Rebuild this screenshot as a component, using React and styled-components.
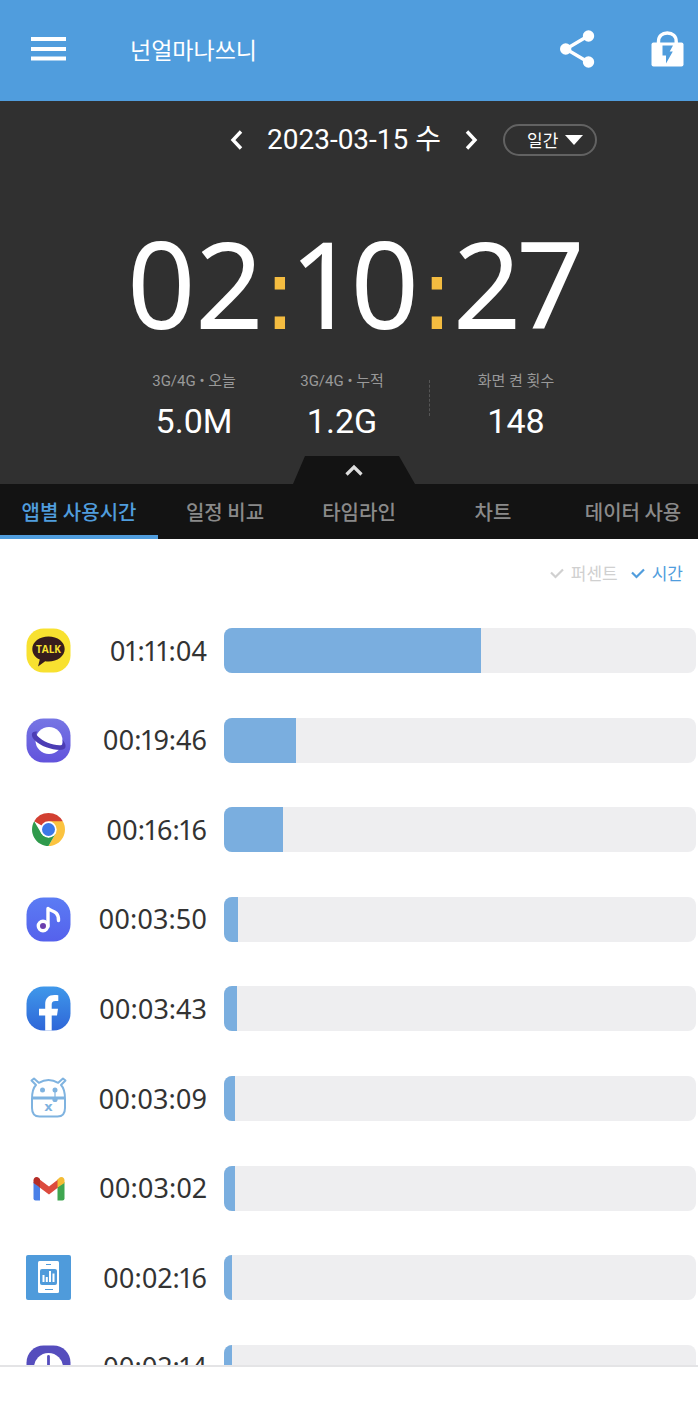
import React, { useState } from 'react'
import styled, { createGlobalStyle } from 'styled-components';

const GlobalStyle = createGlobalStyle`
  * {
    box-sizing: border-box;
  }
  body {
    margin: 0;
    background: #fff;
    font-family: Roboto, 'Noto Sans CJK KR', sans-serif;
  }
  button, select, input {
    margin: 0;
    padding: 0;
    border: 0;
    background: none;
    color: inherit;
    font: inherit;
    cursor: pointer;
  }
`;

const TOTAL_SECONDS = 7827;

const apps = [
  { name: '카카오톡', time: '01:11:04', Icon: TalkIcon },
  { name: '삼성 인터넷', time: '00:19:46', Icon: PlanetIcon },
  { name: 'Chrome', time: '00:16:16', Icon: ChromeIcon },
  { name: '삼성 뮤직', time: '00:03:50', Icon: MusicIcon },
  { name: 'Facebook', time: '00:03:43', Icon: FacebookIcon },
  { name: '돼지', time: '00:03:09', Icon: PiggyIcon },
  { name: 'Gmail', time: '00:03:02', Icon: GmailIcon },
  { name: '넌얼마나쓰니', time: '00:02:16', Icon: UsageIcon },
  { name: '시계', time: '00:02:14', Icon: ClockIcon },
];

const tabs = ['앱별 사용시간', '일정 비교', '타임라인', '차트', '데이터 사용'];

const toPercent = (time) => {
  const [h, m, s] = time.split(':').map(Number);
  return ((h * 3600 + m * 60 + s) / TOTAL_SECONDS) * 100;
};

function TalkIcon() {
  return (
    <svg viewBox="0 0 45 45" aria-hidden="true">
      <rect x="0.5" y="0.5" width="44" height="44" rx="17" fill="#f8e130" />
      <path d="M22.500 8.500C31.500 8.500 38.700 13.800 38.700 21S31.500 33.500 22.500 33.500Q20.800 33.500 19.200 33.200L12 38.500L13.800 31.600C9 29.500 6.300 25.600 6.300 21C6.300 13.800 13.500 8.500 22.500 8.500Z" fill="#371c1d" />
      <text x="22.500" y="25" textAnchor="middle" fontFamily="Open Sans, sans-serif" fontSize="10" fontWeight="700" fill="#f8e130">TALK</text>
    </svg>
  )
}

function PlanetIcon() {
  return (
    <svg viewBox="0 0 45 45" aria-hidden="true">
      <defs>
        <linearGradient id="planet" x1="0" y1="0" x2="0" y2="1">
          <stop offset="0" stopColor="#7676e4" />
          <stop offset="1" stopColor="#6253dc" />
        </linearGradient>
      </defs>
      <rect x="0.5" y="0.5" width="44" height="44" rx="17" fill="url(#planet)" />
      <circle cx="23" cy="22.500" r="13.500" fill="#fff" />
      <path d="M11.500 13.500C4.500 12.500 4.500 18 9 22.500C15 28.500 27 32.500 36 31.800C41 31 40.500 26 36.300 21.500C37.800 25.500 37 27.500 33.500 27.300C26 27 17 23.500 12 18.500C9.800 16.200 10 14.500 11.500 13.500Z" fill="#4c3db4" />
    </svg>
  )
}

function ChromeIcon() {
  return (
    <svg viewBox="0 0 45 45" aria-hidden="true">
      <g transform="translate(22.500 22.500)">
        <path d="M0 0L-14.300 -8.200A16.500 16.500 0 0 1 14.300 -8.200Z" fill="#d23f31" />
        <path d="M0 -8.200H14.300A16.500 16.500 0 0 1 0 16.500L7.100 4.100Z" fill="#fbc33f" />
        <path d="M-14.300 -8.200L-7.100 4.100L0 8L7.100 4.100L0 16.500A16.500 16.500 0 0 1 -14.300 -8.200Z" fill="#2f9a4c" />
        <circle r="8.200" fill="#fff" />
        <circle r="6.500" fill="#3b78e7" />
      </g>
    </svg>
  )
}

function MusicIcon() {
  return (
    <svg viewBox="0 0 45 45" aria-hidden="true">
      <defs>
        <linearGradient id="music" x1="0" y1="0" x2="0" y2="1">
          <stop offset="0" stopColor="#5b7cf4" />
          <stop offset="1" stopColor="#5561ec" />
        </linearGradient>
      </defs>
      <rect x="0.500" y="0.500" width="44" height="44" rx="17" fill="url(#music)" />
      <circle cx="17" cy="29" r="4.700" fill="#6a3fae" stroke="#fff" strokeWidth="3.400" />
      <path d="M22 29.500V11.500C24 14.500 33 13 32.500 23.500" fill="none" stroke="#fff" strokeWidth="3.400" strokeLinecap="round" strokeLinejoin="round" />
    </svg>
  )
}

function FacebookIcon() {
  return (
    <svg viewBox="0 0 45 45" aria-hidden="true">
      <defs>
        <linearGradient id="facebook" x1="0" y1="0" x2="0" y2="1">
          <stop offset="0" stopColor="#3f98ea" />
          <stop offset="1" stopColor="#2f66d8" />
        </linearGradient>
      </defs>
      <rect x="0.500" y="0.500" width="44" height="44" rx="17" fill="url(#facebook)" />
      <path d="M19.200 44.500V29.500H13V22.800H19.200V18.500C19.200 12.200 22.500 9 28.500 9C30 9 31.200 9.100 32.300 9.300V15H29.500C26.500 15 25.700 16.300 25.700 18.800V22.800H32L31 29.500H25.700V44.500Z" fill="#fff" />
    </svg>
  )
}

function PiggyIcon() {
  return (
    <svg viewBox="0 0 45 45" aria-hidden="true">
      <g fill="none" stroke="#7fb3e0" strokeWidth="2" strokeLinejoin="round">
        <path d="M6 23C6 16 7.500 11.500 10 9L5.500 4.500L8 2.500L12.800 6.800C19 3.300 26 3.300 32.200 6.800L37 2.500L39.500 4.500L35 9C37.500 11.500 39 16 39 23V32Q39 40.500 31.500 40.500H13.500Q6 40.500 6 32Z" />
        <path d="M6 22H39" strokeWidth="3.200" />
        <path d="M29 14V24" strokeWidth="1.200" />
      </g>
      <g fill="#7fb3e0">
        <circle cx="16.500" cy="14" r="2.500" />
        <circle cx="29" cy="14" r="2.500" />
        <circle cx="29" cy="23.500" r="2.600" />
        <text x="22.500" y="35" textAnchor="middle" fontFamily="DejaVu Sans, sans-serif" fontSize="13" fontWeight="700">x</text>
      </g>
    </svg>
  )
}

function GmailIcon() {
  return (
    <svg viewBox="0 0 45 45" aria-hidden="true">
      <path d="M7.500 16L14 21V34.500H9.500Q7.500 34.500 7.500 32.500Z" fill="#4a80e8" />
      <path d="M31.500 21L38.500 16V32.500Q38.500 34.500 36.500 34.500H31.500Z" fill="#3fa650" />
      <path d="M13 13L23 20.500L32 13.500V21.500L23 28.500L13 21Z" fill="#dc4b3e" />
      <path d="M7.500 14.500C7.500 11 11 10 13.500 12.500L14 13V21.500L7.500 17Z" fill="#b52d27" />
      <path d="M38.500 14.500C38.500 11 35 10 32.500 12.500L31.500 13.500V21.500L38.500 17Z" fill="#f4bc35" />
    </svg>
  )
}

function UsageIcon() {
  return (
    <svg viewBox="0 0 45 45" aria-hidden="true">
      <rect width="45" height="45" rx="2" fill="#4f9bdb" />
      <rect x="12" y="6" width="21" height="32" rx="1.500" fill="#fff" />
      <rect x="14" y="14" width="17" height="16" rx="2" fill="#4f9bdb" />
      <path d="M20 9.500H25M19 34.500H27" stroke="#4f9bdb" strokeWidth="1.200" />
      <path d="M17.500 27V20M20.800 27V22M24 27V16M27.500 27V18.500" stroke="#fff" strokeWidth="2" />
    </svg>
  )
}

function ClockIcon() {
  return (
    <svg viewBox="0 0 45 45" aria-hidden="true">
      <rect x="0.500" y="0.500" width="44" height="44" rx="17" fill="#554dbd" />
      <circle cx="22.500" cy="22.500" r="14.500" fill="#fff" />
      <path d="M22.500 11.500V23" stroke="#554dbd" strokeWidth="2.800" strokeLinecap="round" />
    </svg>
  )
}

function CheckMark() {
  return (
    <svg width="14" height="11" viewBox="0 0 14 11" aria-hidden="true">
      <path d="M1 4.500L5.500 9L13 1.500" fill="none" stroke="currentColor" strokeWidth="2.200" />
    </svg>
  )
}

function Header() {
  return (
    <HeaderStyled>
      <IconButton aria-label="메뉴">
        <svg width="35" height="24" viewBox="0 0 35 24">
          <path d="M0 2H35M0 12H35M0 21.500H35" stroke="#fff" strokeWidth="3.800" />
        </svg>
      </IconButton>
      <h1>넌얼마나쓰니</h1>
      <IconButton aria-label="공유">
        <svg width="35" height="38" viewBox="0 0 35 38">
          <path d="M28 6L6 19L28 32" fill="none" stroke="#fff" strokeWidth="3.400" />
          <g fill="#fff">
            <circle cx="28.500" cy="6" r="5.700" />
            <circle cx="5.700" cy="19" r="5.700" />
            <circle cx="28.500" cy="32" r="5.700" />
          </g>
        </svg>
      </IconButton>
      <IconButton aria-label="잠금">
        <svg width="33" height="36" viewBox="0 0 33 36">
          <path d="M7.500 15V10.500C7.500 5 11 2 16.300 2S25.200 5 25.200 10.500V15" fill="none" stroke="#fff" strokeWidth="3.400" />
          <rect x="0.500" y="11.500" width="32" height="24" rx="2" fill="#fff" />
          <path d="M11.500 14.500H22L18.700 20.500H21.800L15 32.500V24.500H11.500Z" fill="#509ddd" />
        </svg>
      </IconButton>
    </HeaderStyled>
  )
}

function Summary() {
  return (
    <SummaryStyled>
      <DateRow>
        <DatePicker>
          <IconButton aria-label="이전 날짜">
            <svg width="14" height="20" viewBox="0 0 14 20">
              <path d="M12 1.500L4 10L12 18.500" fill="none" stroke="#fff" strokeWidth="3.400" />
            </svg>
          </IconButton>
          <time dateTime="2023-03-15">2023-03-15 수</time>
          <IconButton aria-label="다음 날짜">
            <svg width="14" height="20" viewBox="0 0 14 20">
              <path d="M2 1.500L10 10L2 18.500" fill="none" stroke="#fff" strokeWidth="3.400" />
            </svg>
          </IconButton>
        </DatePicker>
        <PeriodPicker>
          <select aria-label="기간" defaultValue="일간">
            <option>일간</option>
            <option>주간</option>
            <option>월간</option>
          </select>
          <svg width="18" height="10" viewBox="0 0 18 10" aria-hidden="true">
            <path d="M0 0H18L9 10Z" fill="#fff" />
          </svg>
        </PeriodPicker>
      </DateRow>
      <Clock>
        <span>02</span><Colon>:</Colon><span>10</span><Colon>:</Colon><span>27</span>
      </Clock>
      <Stats>
        <Stat>
          <dt>3G/4G • 오늘</dt>
          <dd>5.0M</dd>
        </Stat>
        <Stat>
          <dt>3G/4G • 누적</dt>
          <dd>1.2G</dd>
        </Stat>
        <Stat $divided>
          <dt>화면 켠 횟수</dt>
          <dd>148</dd>
        </Stat>
      </Stats>
      <Handle aria-label="접기">
        <svg width="18" height="12" viewBox="0 0 18 12">
          <path d="M1.500 10.500L9 3L16.500 10.500" fill="none" stroke="#ddd" strokeWidth="3.200" />
        </svg>
      </Handle>
    </SummaryStyled>
  )
}

function AppRow({ name, time, Icon }) {
  return (
    <AppRowStyled aria-label={name}>
      <Icon />
      <Duration>{time}</Duration>
      <Track>
        <Fill style={{ width: `${toPercent(time)}%` }} />
      </Track>
    </AppRowStyled>
  )
}

function App() {
  const [tab, setTab] = useState(0);
  const [unit, setUnit] = useState('시간');

  return (
    <Page>
      <GlobalStyle />
      <Header />
      <Summary />
      <Tabs role="tablist">
        {tabs.map((label, i) => (
          <Tab key={label} role="tab" aria-selected={i === tab} $active={i === tab} onClick={() => setTab(i)}>
            {label}
          </Tab>
        ))}
      </Tabs>
      <Units>
        {['퍼센트', '시간'].map((label) => (
          <UnitOption key={label} $active={label === unit}>
            <input type="radio" name="unit" checked={label === unit} onChange={() => setUnit(label)} />
            <CheckMark />
            {label}
          </UnitOption>
        ))}
      </Units>
      <Viewport>
        <AppList>
          {apps.map((app) => (
            <AppRow key={app.name} {...app} />
          ))}
        </AppList>
      </Viewport>
      <Footer />
    </Page>
  )
}

const koreanFont = "'Noto Sans CJK KR', sans-serif";

const Page = styled.div`
  display: flex;
  flex-direction: column;
  height: 100vh;
  overflow: hidden;
`;

const IconButton = styled.button`
  display: flex;
  align-items: center;
  justify-content: center;
`;

const HeaderStyled = styled.header`
  display: flex;
  align-items: center;
  flex-shrink: 0;
  height: 101px;
  padding: 0 14px 4px 31px;
  background: #509ddd;
  color: #fff;
  h1 {
    flex: 1;
    margin: 0 0 0 64px;
    font-family: ${koreanFont};
    font-size: 23px;
    line-height: 32px;
    font-weight: 400;
  }
  button + button {
    margin-left: 56px;
  }
`;

const SummaryStyled = styled.section`
  display: flex;
  flex-direction: column;
  align-items: center;
  flex-shrink: 0;
  padding: 23px 0 0 10px;
  background: #303030;
  color: #fff;
`;

const DateRow = styled.div`
  display: grid;
  grid-template-columns: 1fr auto 1fr;
  align-items: center;
  width: 100%;
`;

const DatePicker = styled.div`
  grid-column: 2;
  display: flex;
  align-items: center;
  gap: 24px;
  font-size: 28px;
  line-height: 32px;
`;

const PeriodPicker = styled.label`
  display: flex;
  align-items: center;
  justify-self: start;
  gap: 6px;
  height: 32px;
  margin-left: 24px;
  padding: 0 12px 0 22px;
  border: 2px solid #626262;
  border-radius: 16px;
  select {
    appearance: none;
    font-family: ${koreanFont};
    font-size: 17px;
    line-height: 28px;
  }
`;

const Clock = styled.div`
  display: flex;
  align-items: baseline;
  margin-top: 59px;
  font-family: 'Noto Sans', 'Open Sans', sans-serif;
  font-size: 120px;
  line-height: 136px;
  font-variant-numeric: proportional-nums;
`;

const Colon = styled.span`
  display: flex;
  justify-content: center;
  width: 34px;
  color: #f4bc40;
  font-family: 'DejaVu Sans', sans-serif;
  font-size: 100px;
`;

const Stats = styled.dl`
  display: grid;
  grid-template-columns: 148px 148px 172px;
  margin: 7px 0 14px;
`;

const Stat = styled.div`
  position: relative;
  padding-left: ${(props) => (props.$divided ? '28px' : '0')};
  text-align: center;
  dt {
    color: #999;
    font-size: 15px;
    line-height: 22px;
  }
  dd {
    margin: 8px 0 0;
    font-size: 34px;
    line-height: 42px;
  }
  &::before {
    content: '';
    display: ${(props) => (props.$divided ? 'block' : 'none')};
    position: absolute;
    left: 13px;
    top: 10px;
    height: 36px;
    border-left: 1px dashed #555;
  }
`;

const Handle = styled.button`
  display: flex;
  align-items: center;
  justify-content: center;
  width: 122px;
  height: 28px;
  background: #131313;
  clip-path: polygon(12px 0, 106px 0, 100% 100%, 0 100%);
`;

const Tabs = styled.div`
  display: grid;
  grid-template-columns: minmax(158px, 6fr) repeat(3, minmax(134px, 5fr)) minmax(146px, 5fr);
  flex-shrink: 0;
  height: 55px;
  overflow: hidden;
  background: #131313;
`;

const Tab = styled.button`
  box-shadow: inset 0 -4px ${(props) => (props.$active ? '#509ddd' : 'transparent')};
  color: ${(props) => (props.$active ? '#509ddd' : '#8a8a8a')};
  font-family: ${koreanFont};
  font-size: 20px;
  font-weight: 500;
  line-height: 28px;
  white-space: nowrap;
`;

const Units = styled.div`
  display: flex;
  justify-content: flex-end;
  flex-shrink: 0;
  gap: 13px;
  padding: 22px 15px 21px;
`;

const UnitOption = styled.label`
  display: flex;
  align-items: center;
  gap: 7px;
  color: ${(props) => (props.$active ? '#509ddd' : '#d0d0d0')};
  font-family: ${koreanFont};
  font-size: 17px;
  line-height: 24px;
  cursor: pointer;
  input {
    position: absolute;
    opacity: 0;
  }
`;

const Viewport = styled.main`
  flex: 1;
  min-height: 0;
  overflow: hidden;
`;

const AppList = styled.ul`
  display: grid;
  grid-auto-rows: 1fr;
  height: 806px;
  margin: 0;
  padding: 0;
  list-style: none;
`;

const AppRowStyled = styled.li`
  display: flex;
  align-items: center;
  padding: 0 2px 0 26px;
  svg {
    flex: none;
    width: 45px;
    height: 45px;
  }
`;

const Duration = styled.span`
  flex: none;
  width: 136px;
  color: #333;
  font-family: 'Noto Sans', 'Open Sans', sans-serif;
  font-size: 27px;
  line-height: 40px;
  font-variant-numeric: proportional-nums;
  text-align: right;
`;

const Track = styled.div`
  flex: 1;
  height: 45px;
  margin-left: 17px;
  border-radius: 8px;
  background: #eeeef0;
  overflow: hidden;
`;

const Fill = styled.div`
  height: 100%;
  background: #7aaedf;
`;

const Footer = styled.footer`
  flex-shrink: 0;
  height: 39px;
  border-top: 2px solid #e4e4e6;
`;

export default App;
